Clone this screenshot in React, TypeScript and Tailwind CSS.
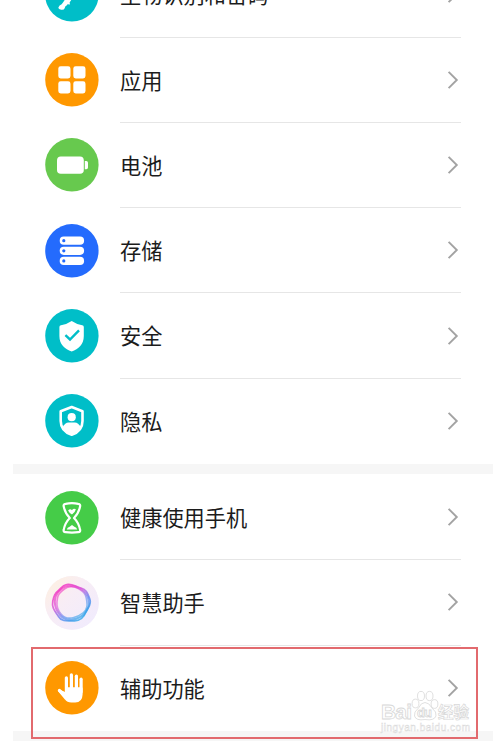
import type { ReactNode } from 'react';

interface SettingItem {
  label: string;
  icon: ReactNode;
  // 圆形图标底色
  color: string;
}

const fingerprintIcon = (
  <g fill="#fff">
    <path d="M14.6 37.6 Q17 36.4 18 34.5 L21 30 H27.5 L24.6 34.6 L25 36.4 L22.6 36.2 L21.6 37.4 Q19.8 38 19.8 40 Q19 42.2 16.2 41.8 Q13 41.4 13.4 39.4 Z" />
  </g>
);

const appsIcon = (
  <g fill="#fff">
    <rect x="13.3" y="13.3" width="12.2" height="12.2" rx="2.4" />
    <rect x="28.3" y="13.3" width="12.2" height="12.2" rx="2.4" />
    <rect x="13.3" y="28.3" width="12.2" height="12.2" rx="2.4" />
    <rect x="28.3" y="28.3" width="12.2" height="12.2" rx="2.4" />
  </g>
);

const batteryIcon = (
  <g fill="#fff">
    <rect x="12" y="18.6" width="26.8" height="17.2" rx="3.8" />
    <path d="M39.8 23 h1.5 a1.7 1.7 0 0 1 1.7 1.7 v4.8 a1.7 1.7 0 0 1 -1.7 1.7 h-1.5 z" />
  </g>
);

const storageIcon = (
  <g>
    {[12.6, 22.7, 32.8].map((y) => (
      <g key={y}>
        <rect x="14.7" y={y} width="24.4" height="8.2" rx="4.1" fill="#fff" />
        <circle cx="18.8" cy={y + 4.1} r="1.6" fill="#246bfd" />
      </g>
    ))}
  </g>
);

const securityIcon = (
  <g>
    <path
      d="M26.7 12 Q32 15.6 37.2 16.2 Q38.8 16.4 38.8 18 V27 C38.8 35.5 33.5 40 26.7 42.4 C19.9 40 14.4 35.5 14.4 27 V18 Q14.4 16.4 16 16.2 Q21.4 15.6 26.7 12 Z"
      fill="#fff"
    />
    <path d="M20.4 26.2 L25 30.5 L34 21.4" fill="none" stroke="#00bec8" strokeWidth="2.4" />
  </g>
);

const privacyIcon = (
  <g>
    <path
      d="M26.7 13 L37.5 17.2 V27 C37.5 34.5 32.8 38.7 26.7 40.8 C20.6 38.7 15.7 34.5 15.7 27 V17.2 Z"
      fill="none"
      stroke="#fff"
      strokeWidth="2.6"
      strokeLinejoin="round"
    />
    <circle cx="26.7" cy="23.2" r="4.1" fill="#fff" />
    <path d="M17.6 33.2 Q20 28.5 23.6 28.4 H29.8 Q33.4 28.5 35.7 33.2 Q32 38.5 26.7 40.3 Q21 38.5 17.6 33.2 Z" fill="#fff" />
  </g>
);

const hourglassIcon = (
  <g>
    <path
      d="M20.5 12.8 Q27 11.6 33.3 12.8 Q35.8 13.2 35 15.8 C34 20.8 32 24 29 27 C32 30 34 33.4 35 38.4 Q35.8 41 33.3 41.2 Q27 42 20.5 41.2 Q18 41 18.8 38.4 C19.8 33.4 21.8 30 24.8 27 C21.8 24 19.8 20.8 18.8 15.8 Q18 13.2 20.5 12.8 Z"
      fill="none"
      stroke="#fff"
      strokeWidth="2.2"
      strokeLinejoin="round"
    />
    <path d="M23.1 19.4 Q25.2 17 27 19.2 Q28.4 17 30.9 18.3 Q30.3 21 27 23.6 Q24 21.5 23.1 19.4 Z" fill="#fff" />
    <path d="M21.8 38.6 Q22.3 36.6 24.6 35.8 L27 34 L29.4 35.8 Q31.7 36.6 32.2 38.6 Z" fill="#fff" />
  </g>
);

// 多层细线叠加成的渐变光环
const assistantIcon = (
  <g>
    <defs>
      <linearGradient id="halo" x1="0" y1="0" x2="1" y2="1">
        <stop offset="0" stopColor="#fff1dc" />
        <stop offset="0.4" stopColor="#f8edf5" />
        <stop offset="1" stopColor="#efebff" />
      </linearGradient>
      <linearGradient id="ring" x1="0.15" y1="0.1" x2="0.8" y2="0.95">
        <stop offset="0" stopColor="#f42fc0" />
        <stop offset="0.35" stopColor="#d84fd8" />
        <stop offset="0.65" stopColor="#5f86f0" />
        <stop offset="1" stopColor="#28a8e8" />
      </linearGradient>
    </defs>
    <circle cx="27" cy="27" r="26.8" fill="url(#halo)" />
    <g fill="none" stroke="url(#ring)">
      <path
        d="M21.5 8.5 C27 7.2 30 10.4 36 12 C42.5 14 42.8 18.5 44.8 23 C47 28.5 43 31 41 36 C38.8 41.5 35 45 29 44.8 C23 44.8 16.5 46 13.5 40.5 C10 35 6.5 32 7.8 25 C9 19.5 9.8 17.5 13.5 14.5 C16.5 12 17.2 9.2 21.5 8.5 Z"
        strokeWidth="1.7"
        opacity="0.8"
      />
      <path
        d="M21 10.2 C27 9 31 10.5 36 13.2 C41 16 42.5 19 43.6 24 C44.6 29 43.5 33 39.5 37.5 C36 41.5 33 42.6 27.5 43.6 C22 44.5 17.8 42.5 14.5 38.5 C11 34 9.8 30.5 9.8 25.5 C10 20 11.5 17.5 15 14.6 C17 12.2 18 10.8 21 10.2 Z"
        strokeWidth="2"
        opacity="0.7"
      />
      <path
        d="M22 11.5 C27 9.8 33 12 37 15 C40.5 18 41 20 41.8 25 C42.5 29 42.5 33 38.5 36.5 C34.5 39.8 33 40.8 28 41.8 C22.5 43 19 41.5 16 38 C13 34.5 11.5 30 12 25.5 C12.5 20.5 13 18.5 16.5 15.5 C18.5 13.5 19.5 12.5 22 11.5 Z"
        strokeWidth="1.6"
        opacity="0.6"
      />
    </g>
  </g>
);

const handIcon = (
  <g stroke="#fff" strokeLinecap="round" strokeLinejoin="round">
    <g strokeWidth="3.2">
      <path d="M21.4 16.8 V30" />
      <path d="M26.4 13.8 V30" />
      <path d="M31.4 15.2 V30" />
      <path d="M36.1 18.2 V31" />
      <path d="M14.4 29.4 L19.6 34.4" />
    </g>
    <path d="M21.2 27.5 H36.4 V33.5 Q36.2 40.2 30.2 40.4 H26.3 Q22.8 40.4 20.8 37.6 L14.2 29.8 L21.2 32.6 Z" fill="#fff" strokeWidth="2.4" />
  </g>
);

const deviceItems: SettingItem[] = [
  { label: '生物识别和密码', icon: fingerprintIcon, color: '#00bec8' },
  { label: '应用', icon: appsIcon, color: '#ff9800' },
  { label: '电池', icon: batteryIcon, color: '#67c94e' },
  { label: '存储', icon: storageIcon, color: '#246bfd' },
  { label: '安全', icon: securityIcon, color: '#00bec8' },
  { label: '隐私', icon: privacyIcon, color: '#00bec8' },
];

const assistItems: SettingItem[] = [
  { label: '健康使用手机', icon: hourglassIcon, color: '#45cc48' },
  { label: '智慧助手', icon: assistantIcon, color: '#f8edf5' },
  { label: '辅助功能', icon: handIcon, color: '#ff9800' },
];

function SettingRow({ item, last }: { item: SettingItem; last: boolean }) {
  return (
    <div className="flex h-[85.3px] items-center pl-8">
      <svg className="h-[54px] w-[54px] shrink-0" viewBox="0 0 54 54">
        <circle cx="26.9" cy="26.8" r="26.7" fill={item.color} />
        {item.icon}
      </svg>
      <div
        className={`ml-[21px] mr-8 flex h-full flex-1 items-center justify-between border-b ${last ? 'border-transparent' : 'border-[#e6e6e6]'}`}
      >
        <span className="pb-px text-[21.2px] leading-none text-[#1c1c1c]">{item.label}</span>
        <svg className="mr-0.5 h-5 w-3" viewBox="0 0 12 20" fill="none" stroke="#a3a3a3" strokeWidth="1.9">
          <path d="M1.6 1.8 L9.8 10 L1.6 18.2" />
        </svg>
      </div>
    </div>
  );
}

function SettingGroup({ items }: { items: SettingItem[] }) {
  return (
    <div>
      {items.map((item, i) => (
        <SettingRow key={item.label} item={item} last={i === items.length - 1} />
      ))}
    </div>
  );
}

function Watermark() {
  return (
    <div className="absolute left-[380px] top-[690px] h-[46px] w-[94px]">
      <svg
        className="h-full w-full"
        viewBox="0 0 94 46"
        fill="#fff"
        stroke="#d8d8d8"
        strokeWidth="0.8"
        fontFamily='"Liberation Sans", "Noto Sans CJK SC", sans-serif'
      >
        <ellipse cx="35.5" cy="13.5" rx="3.4" ry="4.4" />
        <ellipse cx="41" cy="6" rx="3.5" ry="4.6" />
        <ellipse cx="49.5" cy="6" rx="3.5" ry="4.6" />
        <ellipse cx="54.5" cy="14" rx="3.4" ry="4.4" />
        <path d="M45 12.5 Q49 12.5 52 18 Q57 22 56 26 Q54 31 45 29.5 Q36 31 34.5 26 Q33.5 22 38.5 18 Q41 12.5 45 12.5 Z" />
        <text x="1" y="29" fontSize="21" fontWeight="bold" textLength="31">Bai</text>
        <text x="37" y="27" fontSize="13" fontWeight="bold" textLength="15">du</text>
        <text x="58" y="28" fontSize="15.5" fontWeight="bold" strokeWidth="0.7">经验</text>
        <text x="1" y="41" fontSize="10" textLength="89" strokeWidth="0.45">jingyan.baidu.com</text>
      </svg>
    </div>
  );
}

export default function App() {
  return (
    <div className='relative h-[745px] w-[498px] overflow-hidden bg-white font-["Noto_Sans_CJK_SC",sans-serif]'>
      <div className="ml-[13px] mr-[5px] -mt-[47.8px]">
        <SettingGroup items={deviceItems} />
        <div className="mb-px h-2.5 bg-[#f6f6f6]" />
        <SettingGroup items={assistItems} />
        <div className="h-2.5 bg-[#f6f6f6]" />
      </div>
      <Watermark />
      <div className="absolute left-[31px] top-[647px] h-[92px] w-[447px] border-2 border-[#e26a6e]" />
    </div>
  );
}
